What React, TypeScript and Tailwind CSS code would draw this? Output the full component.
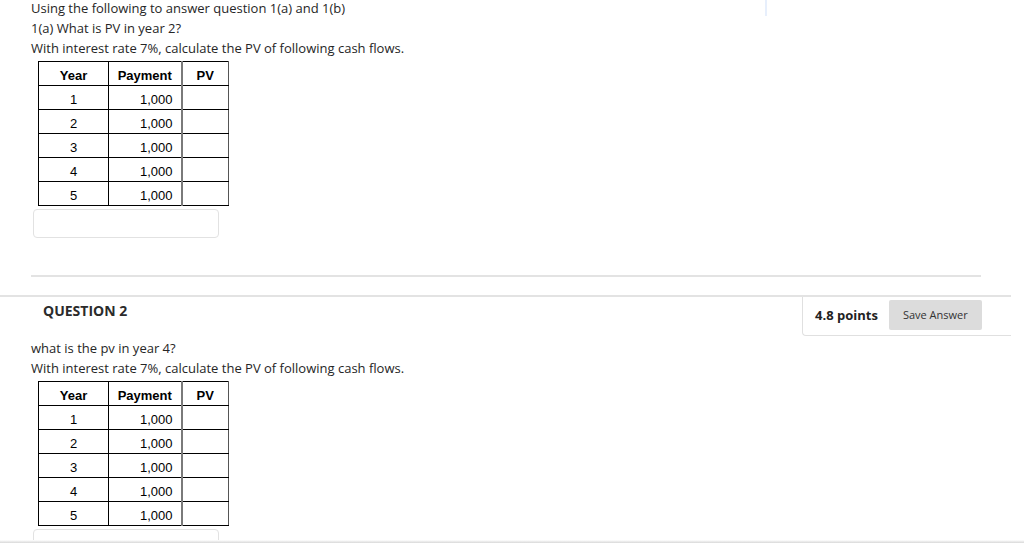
const rows = [1, 2, 3, 4, 5];

const cell = "border border-black p-0 pt-[6px] pb-[1px] leading-[16px]";
const pvCell = "border border-black border-l-2 border-l-[#7a7a7a] border-r-[#555] p-0";

const CashTable = ({ shift }: { shift: string }) => (
  <table className={`border-collapse font-['Liberation_Sans',Arial,sans-serif] text-[13px] text-black ml-[7px] ${shift}`}>
    <thead>
      <tr className="h-[24px]">
        <th className={`w-[70px] font-bold text-center ${cell}`}>Year</th>
        <th className={`w-[73px] font-bold text-center ${cell}`}>Payment</th>
        <th className={`w-[47px] font-bold text-center ${pvCell} pt-[6px] pb-[1px] leading-[16px]`}>PV</th>
      </tr>
    </thead>
    <tbody>
      {rows.map((y) => (
        <tr key={y} className="h-[24px]">
          <td className={`text-center ${cell}`}>{y}</td>
          <td className={`text-right pr-[8px] ${cell}`}>1,000</td>
          <td className={pvCell}></td>
        </tr>
      ))}
    </tbody>
  </table>
);

const AnswerBox = () => (
  <div className="ml-[2px] mt-[3px] w-[186px] h-[29px] border border-[#e2e2e2] rounded-[4px] bg-white" />
);

export default function App() {
  return (
    <div className="relative w-full h-[543px] overflow-hidden bg-white text-[#262626] font-['Open_Sans',sans-serif] text-[13px] leading-[20px]">
      <div className="absolute left-[765px] top-0 w-[2px] h-[16px] bg-[#e7effc]" />

      {/* question 1 body */}
      <div className="pl-[31px] -mt-[2px]">
        <p>Using the following to answer question 1(a) and 1(b)</p>
        <p>1(a) What is PV in year 2?</p>
        <p>With interest rate 7%, calculate the PV of following cash flows.</p>
        <CashTable shift="mt-[3px]" />
        <AnswerBox />
      </div>

      <div className="ml-[31px] mt-[37px] w-[950px] h-[2px] bg-[#e3e3e3]" />

      {/* question 2 header */}
      <div className="mt-[18px] w-[1011px] border-t-2 border-[#e3e3e3] flex justify-between">
        <h3 className="pl-[43px] pt-[4px] text-[14px] font-bold text-[#2b2b2b]">QUESTION 2</h3>
        <div className="w-[209px] h-[39px] border-l border-b border-[#e0e0e0] rounded-bl-[4px] flex items-start pt-[3px] pl-[12px] gap-[11px]">
          <span className="font-bold text-[13px] text-[#222] leading-[30px]">4.8 points</span>
          <button className="w-[93px] h-[30px] bg-[#dcdcdc] rounded-[2px] text-[11px] text-[#333] flex items-center justify-center">
            Save Answer
          </button>
        </div>
      </div>

      {/* question 2 body */}
      <div className="pl-[31px] mt-[2px]">
        <p>what is the pv in year 4?</p>
        <p>With interest rate 7%, calculate the PV of following cash flows.</p>
        <CashTable shift="mt-[3px]" />
        <AnswerBox />
      </div>

      <div className="absolute left-0 right-0 bottom-0 h-[3px] bg-gradient-to-b from-white to-[#d8d8d8]" />
    </div>
  );
}
